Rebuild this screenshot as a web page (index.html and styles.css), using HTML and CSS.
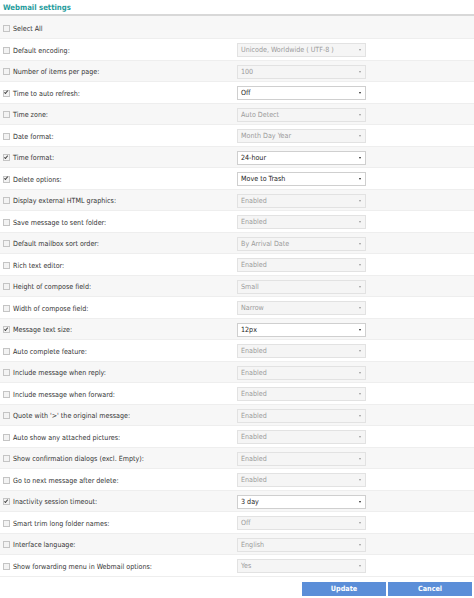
FILE: index.html
```html
<!DOCTYPE html>
<html>
<head>
<meta charset="utf-8">
<link rel="stylesheet" href="styles.css">
</head>
<body>
<div class="page">
  <div class="title">Webmail settings</div>
  <div class="row first"><span class="cb"></span><span class="label">Select All</span></div>
  <div class="row"><span class="cb"></span><span class="label">Default encoding:</span><span class="sel dis">Unicode, Worldwide ( UTF-8 )</span></div>
  <div class="row"><span class="cb"></span><span class="label">Number of items per page:</span><span class="sel dis">100</span></div>
  <div class="row"><span class="cb on"></span><span class="label">Time to auto refresh:</span><span class="sel">Off</span></div>
  <div class="row"><span class="cb"></span><span class="label">Time zone:</span><span class="sel dis">Auto Detect</span></div>
  <div class="row"><span class="cb"></span><span class="label">Date format:</span><span class="sel dis">Month Day Year</span></div>
  <div class="row"><span class="cb on"></span><span class="label">Time format:</span><span class="sel">24-hour</span></div>
  <div class="row"><span class="cb on"></span><span class="label">Delete options:</span><span class="sel">Move to Trash</span></div>
  <div class="row"><span class="cb"></span><span class="label">Display external HTML graphics:</span><span class="sel dis">Enabled</span></div>
  <div class="row"><span class="cb"></span><span class="label">Save message to sent folder:</span><span class="sel dis">Enabled</span></div>
  <div class="row"><span class="cb"></span><span class="label">Default mailbox sort order:</span><span class="sel dis">By Arrival Date</span></div>
  <div class="row"><span class="cb"></span><span class="label">Rich text editor:</span><span class="sel dis">Enabled</span></div>
  <div class="row"><span class="cb"></span><span class="label">Height of compose field:</span><span class="sel dis">Small</span></div>
  <div class="row"><span class="cb"></span><span class="label">Width of compose field:</span><span class="sel dis">Narrow</span></div>
  <div class="row"><span class="cb on"></span><span class="label">Message text size:</span><span class="sel">12px</span></div>
  <div class="row"><span class="cb"></span><span class="label">Auto complete feature:</span><span class="sel dis">Enabled</span></div>
  <div class="row"><span class="cb"></span><span class="label">Include message when reply:</span><span class="sel dis">Enabled</span></div>
  <div class="row"><span class="cb"></span><span class="label">Include message when forward:</span><span class="sel dis">Enabled</span></div>
  <div class="row"><span class="cb"></span><span class="label">Quote with '&gt;' the original message:</span><span class="sel dis">Enabled</span></div>
  <div class="row"><span class="cb"></span><span class="label">Auto show any attached pictures:</span><span class="sel dis">Enabled</span></div>
  <div class="row"><span class="cb"></span><span class="label">Show confirmation dialogs (excl. Empty):</span><span class="sel dis">Enabled</span></div>
  <div class="row"><span class="cb"></span><span class="label">Go to next message after delete:</span><span class="sel dis">Enabled</span></div>
  <div class="row"><span class="cb on"></span><span class="label">Inactivity session timeout:</span><span class="sel">3 day</span></div>
  <div class="row"><span class="cb"></span><span class="label">Smart trim long folder names:</span><span class="sel dis">Off</span></div>
  <div class="row"><span class="cb"></span><span class="label">Interface language:</span><span class="sel dis">English</span></div>
  <div class="row"><span class="cb"></span><span class="label">Show forwarding menu in Webmail options:</span><span class="sel dis">Yes</span></div>
  <div class="buttons"><span class="btn">Update</span><span class="btn">Cancel</span></div>
</div>
</body>
</html>
```
FILE: styles.css
```css
html, body { margin: 0; padding: 0; background: #fff; }
.page {
  width: 474px;
  font-family: "DejaVu Sans Condensed", "DejaVu Sans", sans-serif;
  font-size: 7.1px;
  color: #333;
}
.title {
  color: #1f9c9c;
  font-weight: bold;
  font-size: 7.7px;
  padding: 3px 3px 0 3px;
  box-sizing: border-box;
  height: 16px;
  border-bottom: 2px solid #d8d8d8;
}
.row {
  display: flex;
  align-items: center;
  height: 21.5px;
  box-sizing: border-box;
  padding-top: 2px;
  border-bottom: 1px solid #eeeeee;
  background: #fff;
}
.row:nth-child(even) { background: #f7f7f7; }
.row.first { height: 23px; padding-top: 3px; }
.cb {
  width: 5px;
  height: 5px;
  border: 1px solid #c4c4c4;
  background: #f3f3f3;
  margin: 0 0 0 3px;
  position: relative;
  flex: none;
}
.cb.on::after {
  content: "";
  position: absolute;
  left: 1.2px;
  top: -0.5px;
  width: 1.4px;
  height: 3px;
  border-right: 1.1px solid #444;
  border-bottom: 1.1px solid #444;
  transform: rotate(40deg);
}
.label {
  width: 224px;
  margin-left: 3px;
  flex: none;
  white-space: nowrap;
}
.sel {
  width: 129px;
  height: 14px;
  box-sizing: border-box;
  border: 1px solid #cfcfcf;
  background: #ffffff;
  color: #222;
  padding-left: 3px;
  line-height: 12px;
  position: relative;
  flex: none;
}
.sel::after {
  content: "";
  position: absolute;
  right: 4px;
  top: 5px;
  border-left: 1.5px solid transparent;
  border-right: 1.5px solid transparent;
  border-top: 2.5px solid #222;
}
.sel.dis {
  background: #f5f5f5;
  border-color: #e2e2e2;
  color: #9a9a9a;
}
.sel.dis::after { border-top-color: #999; }
.buttons {
  display: flex;
  justify-content: flex-end;
  gap: 2px;
  padding: 5px 2px 0 0;
}
.btn {
  width: 84px;
  height: 14px;
  background: #5b8ed8;
  color: #fff;
  font-weight: bold;
  font-size: 7.2px;
  text-align: center;
  line-height: 14px;
}
```
